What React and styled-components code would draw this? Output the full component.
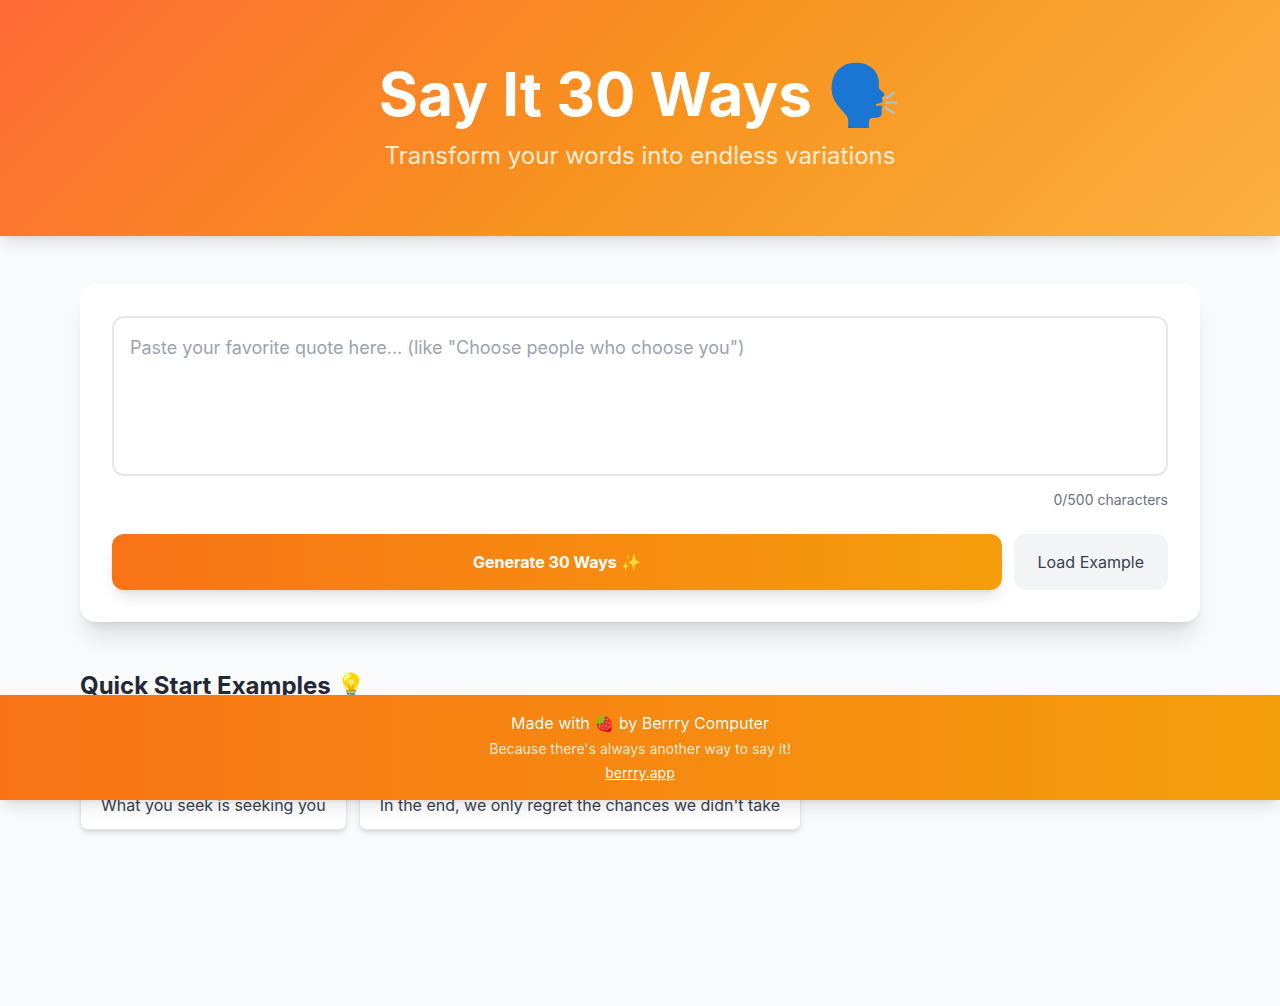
import { useState } from "react";
import styled, { createGlobalStyle } from "styled-components";

const MAX_LENGTH = 500;

const EXAMPLES = [
  "Choose people who choose you",
  "Be yourself; everyone else is already taken",
  "The best time to start is now",
  "What you seek is seeking you",
  "In the end, we only regret the chances we didn't take",
];

const App = () => {
  const [quote, setQuote] = useState("");

  return (
    <>
      <GlobalStyle />
      <Header>
        <Title>Say It 30 Ways 🗣️</Title>
        <Subtitle>Transform your words into endless variations</Subtitle>
      </Header>
      <Main>
        <Card>
          <QuoteInput
            aria-label="Your quote"
            placeholder={
              'Paste your favorite quote here... (like "Choose people who choose you")'
            }
            maxLength={MAX_LENGTH}
            value={quote}
            onChange={(e) => setQuote(e.target.value)}
          />
          <Counter>
            {quote.length}/{MAX_LENGTH} characters
          </Counter>
          <ButtonRow>
            <GenerateButton type="button">Generate 30 Ways ✨</GenerateButton>
            <LoadButton type="button" onClick={() => setQuote(EXAMPLES[0])}>
              Load Example
            </LoadButton>
          </ButtonRow>
        </Card>
        <section>
          <SectionTitle>Quick Start Examples 💡</SectionTitle>
          <ExampleList>
            {EXAMPLES.map((example) => (
              <ExampleButton
                key={example}
                type="button"
                onClick={() => setQuote(example)}
              >
                {example}
              </ExampleButton>
            ))}
          </ExampleList>
        </section>
      </Main>
      <Footer>
        <FooterText>Made with 🍓 by Berrry Computer</FooterText>
        <FooterNote>Because there's always another way to say it!</FooterNote>
        <FooterLink href="https://berrry.app">berrry.app</FooterLink>
      </Footer>
    </>
  );
};

const GlobalStyle = createGlobalStyle`
  * {
    box-sizing: border-box;
    margin: 0;
  }
  body {
    background-color: #f9fafb;
    color: #1f2937;
    font-family: Inter, sans-serif;
    font-size: 16px;
    line-height: 24px;
  }
  button,
  textarea {
    font: inherit;
  }
`;

const Header = styled.header`
  padding: 64px 16px;
  text-align: center;
  color: #ffffff;
  background: linear-gradient(135deg, #ff6b35 0%, #f7931e 50%, #fbb040 100%);
  box-shadow:
    0 10px 15px -3px rgba(0, 0, 0, 0.1),
    0 4px 6px -4px rgba(0, 0, 0, 0.1);
`;
const Title = styled.h1`
  margin-bottom: 16px;
  font-size: 60px;
  font-weight: 700;
  line-height: 60px;
`;
const Subtitle = styled.p`
  color: #ffedd5;
  font-size: 24px;
  line-height: 32px;
`;

const Main = styled.main`
  max-width: 1152px;
  margin: 0 auto;
  padding: 48px 16px;
`;
const Card = styled.section`
  margin-bottom: 48px;
  padding: 32px;
  border-radius: 16px;
  background-color: #ffffff;
  box-shadow:
    0 20px 25px -5px rgba(0, 0, 0, 0.1),
    0 8px 10px -6px rgba(0, 0, 0, 0.1);
`;
const QuoteInput = styled.textarea`
  display: block;
  width: 100%;
  height: 160px;
  padding: 16px;
  border: 2px solid #e5e7eb;
  border-radius: 12px;
  background-color: #ffffff;
  color: #1f2937;
  font-size: 18px;
  line-height: 28px;
  resize: none;

  &::placeholder {
    color: #9ca3af;
  }
  &:focus {
    border-color: #f97316;
    outline: none;
  }
`;
const Counter = styled.p`
  margin: 14px 0 24px;
  color: #6b7280;
  font-size: 14px;
  line-height: 20px;
  text-align: right;
`;
const ButtonRow = styled.div`
  display: flex;
  gap: 12px;
`;
const Button = styled.button`
  padding: 16px 24px;
  border: none;
  border-radius: 12px;
  cursor: pointer;
`;
const GenerateButton = styled(Button)`
  flex: 1;
  color: #ffffff;
  font-weight: 700;
  background: linear-gradient(to right, #f97316, #f59e0b);
  box-shadow:
    0 10px 15px -3px rgba(0, 0, 0, 0.1),
    0 4px 6px -4px rgba(0, 0, 0, 0.1);
`;
const LoadButton = styled(Button)`
  background-color: #f3f4f6;
  color: #374151;
`;

const SectionTitle = styled.h2`
  margin-bottom: 16px;
  font-size: 24px;
  font-weight: 700;
  line-height: 32px;
`;
const ExampleList = styled.div`
  display: flex;
  flex-wrap: wrap;
  gap: 12px;
`;
const ExampleButton = styled.button`
  padding: 12px 20px;
  border: 1px solid #e5e7eb;
  border-radius: 8px;
  background-color: #ffffff;
  color: #374151;
  box-shadow:
    0 4px 6px -1px rgba(0, 0, 0, 0.1),
    0 2px 4px -2px rgba(0, 0, 0, 0.1);
  cursor: pointer;
`;

/* floats over the example list */
const Footer = styled.footer`
  position: fixed;
  right: 0;
  bottom: 206px;
  left: 0;
  padding: 16px;
  text-align: center;
  color: #ffffff;
  background: linear-gradient(to right, #f97316, #f59e0b);
  box-shadow:
    0 10px 15px -3px rgba(0, 0, 0, 0.1),
    0 4px 6px -4px rgba(0, 0, 0, 0.1);
`;
const FooterText = styled.p``;
const FooterNote = styled.p`
  margin-top: 4px;
  color: #ffedd5;
  font-size: 14px;
  line-height: 20px;
`;
const FooterLink = styled.a`
  display: inline-block;
  margin-top: 4px;
  color: inherit;
  font-size: 14px;
  line-height: 20px;
`;

export default App;
